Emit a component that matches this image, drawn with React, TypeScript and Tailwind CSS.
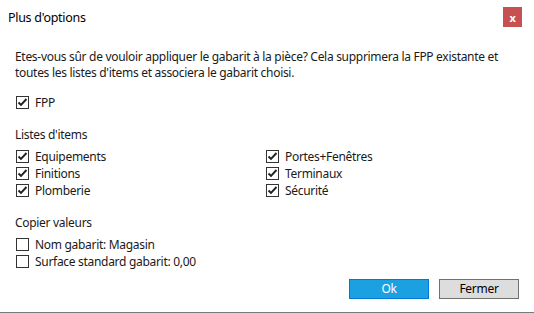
import React from "react";

const Check = ({ checked }: { checked: boolean }) => (
  <span className="w-[13px] h-[13px] border border-[#333333] bg-white flex items-center justify-center shrink-0">
    {checked && (
      <svg width="11" height="11" viewBox="0 0 11 11">
        <path d="M1.5 5.5 L4 8 L9.5 2" fill="none" stroke="#222" strokeWidth="1.9" />
      </svg>
    )}
  </span>
);

const Row = ({ label, checked }: { label: string; checked: boolean }) => (
  <div className="flex items-center h-[17px] gap-[6px] pl-[1px]">
    <Check checked={checked} />
    <span>{label}</span>
  </div>
);

export default function App() {
  return (
    <div
      className="w-[534px] h-[313px] bg-white text-[12px] text-[#1a1a1a] border-b border-[#7a7a7a] flex flex-col leading-[17px] tracking-[-0.3px] whitespace-nowrap"
      style={{ fontFamily: '"Noto Sans", "Open Sans", sans-serif' }}
    >
      <div className="flex items-start justify-between h-[34px] pl-[8px] pr-[12px]">
        <span className="mt-[9px] text-[12.5px] text-black">Plus d'options</span>
        <div className="mt-[7px] w-[19px] h-[20px] bg-[#c75050] text-white flex items-center justify-center text-[11px] font-bold">
          x
        </div>
      </div>
      <div className="px-[15px] pt-[15px] flex flex-col">
        <p className="leading-[16px]">
          Etes-vous sûr de vouloir appliquer le gabarit à la pièce? Cela supprimera la FPP existante et
          <br />
          toutes les listes d'items et associera le gabarit choisi.
        </p>
        <div className="mt-[13px]">
          <Row label="FPP" checked />
        </div>
        <div className="mt-[15px]">Listes d'items</div>
        <div className="mt-[5px] grid grid-cols-[250px_1fr]">
          <div className="flex flex-col">
            <Row label="Equipements" checked />
            <Row label="Finitions" checked />
            <Row label="Plomberie" checked />
          </div>
          <div className="flex flex-col">
            <Row label="Portes+Fenêtres" checked />
            <Row label="Terminaux" checked />
            <Row label="Sécurité" checked />
          </div>
        </div>
        <div className="mt-[15px]">Copier valeurs</div>
        <div className="mt-[5px] flex flex-col">
          <Row label="Nom gabarit: Magasin" checked={false} />
          <Row label="Surface standard gabarit: 0,00" checked={false} />
        </div>
        <div className="mt-[9px] flex justify-end gap-[10px]">
          <button className="w-[80px] h-[20px] bg-[#1ba1e2] border border-[#0078d7] text-white text-[12px] leading-none">
            Ok
          </button>
          <button className="w-[80px] h-[20px] bg-[#dddddd] border border-[#707070] text-black text-[12px] leading-none">
            Fermer
          </button>
        </div>
      </div>
    </div>
  );
}
